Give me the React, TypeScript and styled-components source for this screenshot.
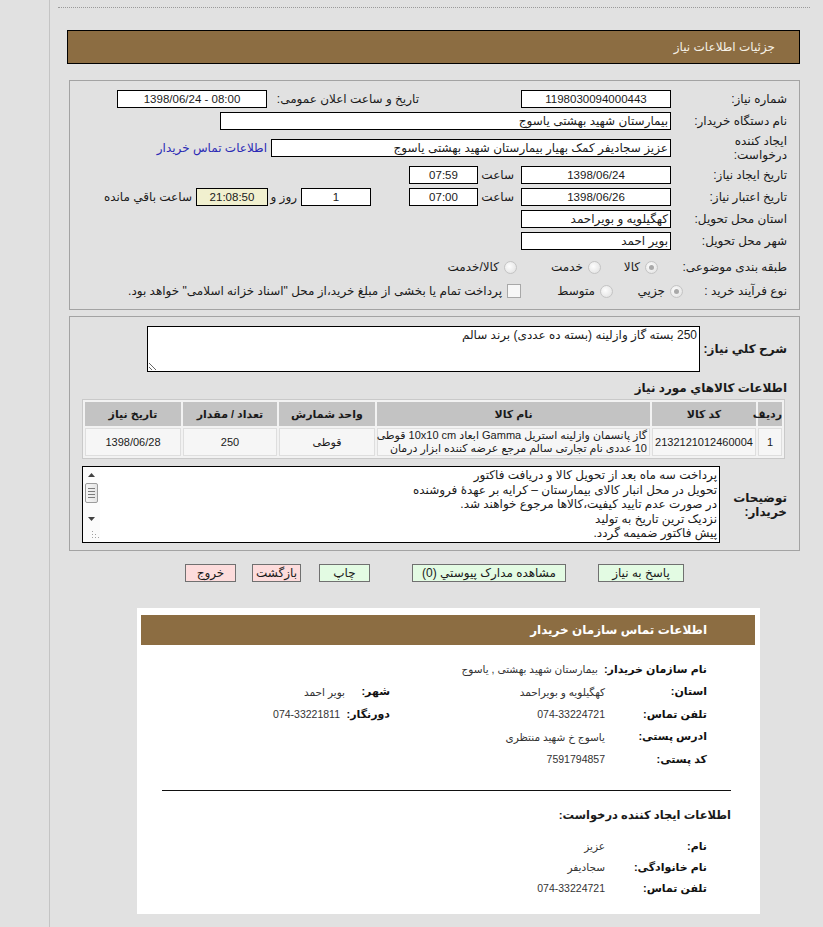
import styled, { createGlobalStyle } from 'styled-components'

const GlobalStyle = createGlobalStyle`
  html, body {
    margin: 0;
    padding: 0;
  }

  body {
    background: #e1e1e1;
    font-family: "Liberation Sans", "DejaVu Sans", sans-serif;
    font-size: 12px;
    color: #1a1a1a;
  }
`

const Frame = styled.div`
  margin-left: 49px;
  min-height: 927px;
  box-sizing: border-box;
  border-left: 1px solid #c4c4c4;
  padding: 7px 13px 0 8px;
`

const DottedRule = styled.div`
  border-top: 1px dotted #9a9a9a;
`

const Main = styled.div`
  margin: 0 10px 0 9px;
  direction: rtl;
`

const PageTitle = styled.div`
  margin-top: 22px;
  height: 32px;
  display: flex;
  align-items: center;
  padding-right: 24px;
  background: #8c6d42;
  border: 1px solid #000;
  color: #f6f1e6;
  font-size: 12px;
`

const Panel = styled.div<{ $mt: number; $pt: number; $pb: number }>`
  margin: ${(p) => p.$mt}px 0 0 0;
  margin-left: 2px;
  border: 1px solid #a3a3a3;
  padding: ${(p) => p.$pt}px 12px ${(p) => p.$pb}px 12px;
`

const Row = styled.div<{ $h?: number; $mt?: number }>`
  display: flex;
  align-items: center;
  height: ${(p) => p.$h ?? 22}px;
  margin-top: ${(p) => p.$mt ?? 0}px;
  white-space: nowrap;
`

const Label = styled.div<{ $w?: number; $bold?: boolean }>`
  width: ${(p) => p.$w ?? 116}px;
  flex-shrink: 0;
  text-align: right;
  line-height: 14px;
  font-weight: ${(p) => (p.$bold ? 'bold' : 'normal')};
`

const Field = styled.div<{ $w: number; $ms?: number; $num?: boolean; $bg?: string }>`
  width: ${(p) => p.$w}px;
  margin-right: ${(p) => p.$ms ?? 0}px;
  height: 18px;
  box-sizing: border-box;
  flex-shrink: 0;
  border: 1px solid #000;
  background: ${(p) => p.$bg ?? '#fff'};
  padding: 0 2px;
  line-height: 16px;
  font-size: ${(p) => (p.$num ? 11.5 : 12)}px;
  direction: ${(p) => (p.$num ? 'ltr' : 'rtl')};
  text-align: ${(p) => (p.$num ? 'center' : 'right')};
  overflow: hidden;
  white-space: nowrap;
`

const Inline = styled.span<{ $w?: number; $ms?: number; $color?: string }>`
  display: inline-block;
  width: ${(p) => (p.$w ? `${p.$w}px` : 'auto')};
  margin-right: ${(p) => p.$ms ?? 0}px;
  flex-shrink: 0;
  color: ${(p) => p.$color ?? 'inherit'};
  text-align: right;
`

const Option = styled.label<{ $w?: number }>`
  display: flex;
  align-items: center;
  gap: 5px;
  width: ${(p) => (p.$w ? `${p.$w}px` : 'auto')};
  flex-shrink: 0;
`

const Radio = styled.span<{ $on?: boolean }>`
  position: relative;
  width: 13px;
  height: 13px;
  box-sizing: border-box;
  border-radius: 50%;
  border: 1px solid #c4c4c4;
  background: radial-gradient(circle at 40% 40%, #fdfdfd, #dedede);

  &::after {
    content: '';
    display: ${(p) => (p.$on ? 'block' : 'none')};
    position: absolute;
    inset: 3px;
    border-radius: 50%;
    background: #a9a9a9;
  }
`

const Checkbox = styled.span`
  width: 14px;
  height: 14px;
  box-sizing: border-box;
  border: 1px solid #a8a8a8;
  background: #f7f7f7;
`

const Area = styled.textarea`
  width: 553px;
  height: 46px;
  box-sizing: border-box;
  flex-shrink: 0;
  margin: 0;
  border: 1px solid #000;
  background: #fff;
  padding: 1px 2px;
  font-family: inherit;
  font-size: 12px;
  line-height: 14.5px;
  color: #1a1a1a;
  direction: rtl;
  resize: both;
  outline: none;
`

const FieldRow = styled.div<{ $mt?: number }>`
  display: flex;
  align-items: center;
  margin-top: ${(p) => p.$mt ?? 0}px;
  white-space: nowrap;
`

const SectionHeading = styled.div`
  margin-top: 7px;
  height: 18px;
  line-height: 18px;
  font-weight: bold;
`

const ItemsTable = styled.table`
  margin: 2px 2px 0 0;
  width: 703px;
  table-layout: fixed;
  border: 1px solid #c9c9c9;
  border-spacing: 2px;
  background: #f2f2f2;
  font-size: 11px;

  th {
    height: 24px;
    padding: 0;
    background: #c3c3c3;
    font-weight: bold;
    text-align: center;
  }

  td {
    height: 25px;
    padding: 0 2px;
    background: #f6f6f6;
    border: 1px solid #dedede;
    text-align: center;
    line-height: 13px;
  }

  td.name {
    text-align: right;
    white-space: nowrap;
  }

  td.code {
    padding: 0 1px;
    direction: ltr;
    text-align: center;
  }
`

const NotesBox = styled.div`
  width: 638px;
  height: 77px;
  box-sizing: border-box;
  flex-shrink: 0;
  display: flex;
  border: 1px solid #000;
  background: #fff;
`

const NotesText = styled.div`
  flex: 1;
  padding: 1px 2px;
  line-height: 14.5px;
  white-space: pre-line;
  overflow: hidden;
`

const ScrollBar = styled.div`
  width: 17px;
  display: flex;
  flex-direction: column;
  align-items: center;
  background: #fbfbfb;
`

const ScrollArrow = styled.div<{ $h: number }>`
  height: ${(p) => p.$h}px;
  display: flex;
  align-items: center;
  justify-content: center;
`

const ScrollThumb = styled.div`
  width: 13px;
  height: 20px;
  box-sizing: border-box;
  border: 1px solid #9c9c9c;
  border-radius: 2px;
  background: linear-gradient(to right, #f6f6f6, #e4e4e4);
  display: flex;
  flex-direction: column;
  align-items: center;
  justify-content: center;
  gap: 2px;

  span {
    width: 7px;
    height: 1px;
    background: #7c7c7c;
  }
`

const Grip = styled.div`
  margin-top: auto;
  align-self: flex-start;
  padding: 0 0 3px 3px;
  line-height: 0;
`

const Buttons = styled.div`
  display: flex;
  justify-content: center;
  margin: 13px 0 0 0;
  margin-left: 2px;
`

const Button = styled.button<{ $w: number; $ms?: number; $tone: 'green' | 'red' }>`
  width: ${(p) => p.$w}px;
  height: 18px;
  margin: 0;
  margin-right: ${(p) => p.$ms ?? 0}px;
  padding: 0;
  box-sizing: border-box;
  border: 1px solid #707070;
  background: ${(p) => (p.$tone === 'green' ? '#e3fbe3' : '#fddcdc')};
  font-family: inherit;
  font-size: 12px;
  color: #1a1a1a;
  line-height: 16px;
`

const ContactBox = styled.div`
  margin: 26px 40px 0 0;
  width: 623px;
  height: 306px;
  box-sizing: border-box;
  background: #fff;
  padding: 7px 5px 0 4px;
`

const ContactTitle = styled.div`
  height: 30px;
  display: flex;
  align-items: center;
  padding-right: 48px;
  background: #8c6d42;
  color: #fff;
  font-weight: bold;
  font-size: 12px;
`

const ContactRows = styled.div<{ $mt: number; $pitch: number }>`
  margin-top: ${(p) => p.$mt}px;
  padding-right: 48px;

  & > div {
    height: ${(p) => p.$pitch}px;
  }
`

const CRow = styled.div`
  display: flex;
  align-items: center;
  white-space: nowrap;
`

const CLabel = styled.div<{ $w: number }>`
  min-width: ${(p) => p.$w}px;
  box-sizing: border-box;
  padding-left: 6px;
  flex-shrink: 0;
  font-weight: bold;
  font-size: 11px;
  color: #111;
`

const CValue = styled.div<{ $w?: number }>`
  width: ${(p) => (p.$w ? `${p.$w}px` : 'auto')};
  flex-shrink: 0;
  font-size: 10.5px;
  color: #333;
`

const Divider = styled.div`
  margin: 19px 24px 0 21px;
  border-top: 1px solid #111;
`

const SubTitle = styled.div`
  margin-top: 15px;
  padding-right: 24px;
  height: 18px;
  line-height: 18px;
  font-weight: bold;
  font-size: 11.5px;
`

const buyerNotes = [
  'پرداخت سه ماه بعد از تحویل کالا و دریافت فاکتور',
  'تحویل در محل انبار کالای بیمارستان – کرایه بر عهدهٔ فروشنده',
  'در صورت عدم تایید کیفیت،کالاها مرجوع خواهند شد.',
  'نزدیک ترین تاریخ به تولید',
  'پیش فاکتور ضمیمه گردد.',
].join('\n')

function Arrow({ down }: { down?: boolean }) {
  return (
    <svg width="7" height="4" viewBox="0 0 7 4">
      <path d={down ? 'M0 0 L7 0 L3.5 4 Z' : 'M0 4 L3.5 0 L7 4 Z'} fill="#404040" />
    </svg>
  )
}

function ResizeGrip() {
  const dots = [
    [1, 1],
    [1, 4],
    [1, 7],
    [4, 4],
    [4, 7],
    [7, 7],
  ]
  return (
    <svg width="9" height="9" viewBox="0 0 9 9">
      {dots.map(([x, y]) => (
        <rect key={`${x}-${y}`} x={x} y={y} width="1" height="1" fill="#a0a0a0" />
      ))}
    </svg>
  )
}

export default function App() {
  return (
    <>
      <GlobalStyle />
      <Frame>
        <DottedRule />
        <Main>
          <PageTitle>جزئیات اطلاعات نیاز</PageTitle>

          <Panel $mt={16} $pt={7} $pb={6}>
            <Row>
              <Label>شماره نیاز:</Label>
              <Field $w={150} $num>1198030094000443</Field>
              <Inline $w={148} $ms={102}>تاریخ و ساعت اعلان عمومی:</Inline>
              <Field $w={150} $ms={4} $num>1398/06/24 - 08:00</Field>
            </Row>
            <Row>
              <Label>نام دستگاه خریدار:</Label>
              <Field $w={451}>بیمارستان شهید بهشتی یاسوج</Field>
            </Row>
            <Row $h={32}>
              <Label>
                ایجاد کننده
                <br />
                درخواست:
              </Label>
              <Field $w={400}>عزیز سجادیفر کمک بهیار بیمارستان شهید بهشتی یاسوج</Field>
              <Inline $ms={4} $color="#2b2bb5">اطلاعات تماس خریدار</Inline>
            </Row>
            <Row>
              <Label>تاریخ ایجاد نیاز:</Label>
              <Field $w={150} $num>1398/06/24</Field>
              <Inline $w={30} $ms={7}>ساعت</Inline>
              <Field $w={69} $ms={6} $num>07:59</Field>
            </Row>
            <Row>
              <Label>تاریخ اعتبار نیاز:</Label>
              <Field $w={150} $num>1398/06/26</Field>
              <Inline $w={30} $ms={7}>ساعت</Inline>
              <Field $w={69} $ms={6} $num>07:00</Field>
              <Field $w={70} $ms={38} $num>1</Field>
              <Inline $w={26} $ms={4}>روز و</Inline>
              <Field $w={72} $ms={3} $num $bg="#f1f0cf">21:08:50</Field>
              <Inline $ms={4}>ساعت باقي مانده</Inline>
            </Row>
            <Row>
              <Label>استان محل تحویل:</Label>
              <Field $w={150}>کهگیلویه و بویراحمد</Field>
            </Row>
            <Row>
              <Label>شهر محل تحویل:</Label>
              <Field $w={150}>بویر احمد</Field>
            </Row>
            <Row $h={24} $mt={3}>
              <Label $w={129}>طبقه بندی موضوعی:</Label>
              <Option $w={57}>
                <Radio $on />
                کالا
              </Option>
              <Option $w={84}>
                <Radio />
                خدمت
              </Option>
              <Option>
                <Radio />
                کالا/خدمت
              </Option>
            </Row>
            <Row $h={24}>
              <Label $w={104}>نوع فرآیند خرید :</Label>
              <Option $w={70}>
                <Radio $on />
                جزیي
              </Option>
              <Option $w={92}>
                <Radio />
                متوسط
              </Option>
              <Option>
                <Checkbox />
                پرداخت تمام یا بخشی از مبلغ خرید،از محل "اسناد خزانه اسلامی" خواهد بود.
              </Option>
            </Row>
          </Panel>

          <Panel $mt={6} $pt={9} $pb={7}>
            <FieldRow>
              <Label $w={87} $bold>
                شرح کلي نیاز:
              </Label>
              <Area readOnly defaultValue="250 بسته گاز وازلینه (بسته ده عددی) برند سالم" />
            </FieldRow>

            <SectionHeading>اطلاعات کالاهاي مورد نیاز</SectionHeading>

            <ItemsTable>
              <colgroup>
                <col style={{ width: 24 }} />
                <col style={{ width: 104 }} />
                <col style={{ width: 273 }} />
                <col style={{ width: 96 }} />
                <col style={{ width: 94 }} />
                <col style={{ width: 96 }} />
              </colgroup>
              <thead>
                <tr>
                  <th>ردیف</th>
                  <th>کد کالا</th>
                  <th>نام کالا</th>
                  <th>واحد شمارش</th>
                  <th>تعداد / مقدار</th>
                  <th>تاریخ نیاز</th>
                </tr>
              </thead>
              <tbody>
                <tr>
                  <td>1</td>
                  <td className="code">2132121012460004</td>
                  <td className="name">
                    گاز پانسمان وازلینه استریل Gamma ابعاد 10x10 cm قوطی
                    <br />
                    10 عددی نام تجارتی سالم مرجع عرضه کننده ابزار درمان
                  </td>
                  <td>قوطی</td>
                  <td>250</td>
                  <td>1398/06/28</td>
                </tr>
              </tbody>
            </ItemsTable>

            <FieldRow $mt={7}>
              <Label $w={67} $bold>
                توضیحات
                <br />
                خریدار:
              </Label>
              <NotesBox>
                <NotesText>{buyerNotes}</NotesText>
                <ScrollBar>
                  <ScrollArrow $h={16}>
                    <Arrow />
                  </ScrollArrow>
                  <ScrollThumb>
                    <span />
                    <span />
                    <span />
                    <span />
                  </ScrollThumb>
                  <ScrollArrow $h={16} style={{ marginTop: 8 }}>
                    <Arrow down />
                  </ScrollArrow>
                  <Grip>
                    <ResizeGrip />
                  </Grip>
                </ScrollBar>
              </NotesBox>
            </FieldRow>
          </Panel>

          <Buttons>
            <Button $w={86} $tone="green">پاسخ به نیاز</Button>
            <Button $w={154} $ms={32} $tone="green">مشاهده مدارک پیوستي (0)</Button>
            <Button $w={51} $ms={42} $tone="green">چاپ</Button>
            <Button $w={49} $ms={18} $tone="red">بازگشت</Button>
            <Button $w={51} $ms={16} $tone="red">خروج</Button>
          </Buttons>

          <ContactBox>
            <ContactTitle>اطلاعات تماس سازمان خریدار</ContactTitle>
            <ContactRows $mt={13} $pitch={22.5}>
              <CRow>
                <CLabel $w={102}>نام سازمان خریدار:</CLabel>
                <CValue>بیمارستان شهید بهشتی , یاسوج</CValue>
              </CRow>
              <CRow>
                <CLabel $w={102}>استان:</CLabel>
                <CValue $w={215}>کهگیلویه و بویراحمد</CValue>
                <CLabel $w={45}>شهر:</CLabel>
                <CValue>بویر احمد</CValue>
              </CRow>
              <CRow>
                <CLabel $w={102}>تلفن تماس:</CLabel>
                <CValue $w={215}>074-33224721</CValue>
                <CLabel $w={50}>دورنگار:</CLabel>
                <CValue>074-33221811</CValue>
              </CRow>
              <CRow>
                <CLabel $w={102}>ادرس پستی:</CLabel>
                <CValue>یاسوج خ شهید منتظری</CValue>
              </CRow>
              <CRow>
                <CLabel $w={102}>کد پستی:</CLabel>
                <CValue>7591794857</CValue>
              </CRow>
            </ContactRows>

            <Divider />
            <SubTitle>اطلاعات ایجاد کننده درخواست:</SubTitle>

            <ContactRows $mt={12} $pitch={21}>
              <CRow>
                <CLabel $w={102}>نام:</CLabel>
                <CValue>عزیز</CValue>
              </CRow>
              <CRow>
                <CLabel $w={102}>نام خانوادگی:</CLabel>
                <CValue>سجادیفر</CValue>
              </CRow>
              <CRow>
                <CLabel $w={102}>تلفن تماس:</CLabel>
                <CValue>074-33224721</CValue>
              </CRow>
            </ContactRows>
          </ContactBox>
        </Main>
      </Frame>
    </>
  )
}
